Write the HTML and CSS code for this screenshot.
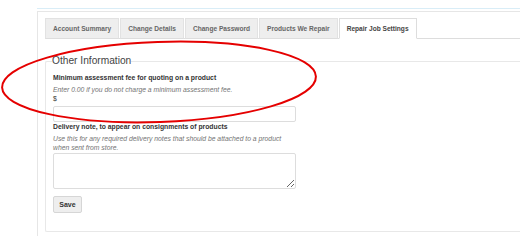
FILE: index.html
```html
<!DOCTYPE html>
<html>
<head>
    <title>Repair Job Settings</title>
    <meta name="viewport" content="width=device-width, initial-scale=1">
    <link rel="stylesheet" href="styles.css">
</head>
<body>
  <div class="page">
    <div class="panel">
      <ul class="tabs">
        <li>Account Summary</li>
        <li>Change Details</li>
        <li>Change Password</li>
        <li>Products We Repair</li>
        <li class="active">Repair Job Settings</li>
      </ul>
      <form class="tab-content" autocomplete="off">
        <fieldset>
          <legend>Other Information</legend>
          <div class="field">
            <label for="minFee">Minimum assessment fee for quoting on a product</label>
            <p class="help">Enter 0.00 if you do not charge a minimum assessment fee.</p>
            <span class="addon">$</span>
            <input type="text" id="minFee" name="minFee">
          </div>
          <div class="field">
            <label for="deliveryNote">Delivery note, to appear on consignments of products</label>
            <p class="help">Use this for any required delivery notes that should be attached to a product<br>when sent from store.</p>
            <textarea id="deliveryNote" name="deliveryNote"></textarea>
          </div>
          <button type="button" class="btn">Save</button>
        </fieldset>
      </form>
    </div>
  </div>
  <svg class="mark" width="520" height="242" viewBox="0 0 520 242">
    <ellipse cx="159" cy="82" rx="157" ry="40" transform="rotate(-2 159 82)" fill="none" stroke="#e50000" stroke-width="2"/>
  </svg>
</body>
</html>
```

FILE: styles.css
```css
* {
  -webkit-box-sizing: border-box;
  -moz-box-sizing: border-box;
  box-sizing: border-box;
}

html, body {
  margin: 0;
  height: 100%;
  overflow: hidden;
  background: #fff;
}

body {
  font-family: "Liberation Sans", Arial, sans-serif;
  color: #333;
  position: relative;
}

.page {
  margin: 8px 0 0 37px;
  width: 483px;
  border-top: 1px solid #d9edf7;
}

.panel {
  margin-top: 2px;
  border-top: 1px solid #e6e6e6;
  border-left: 1px solid #e6e6e6;
  padding: 6px 0 0 7px;
  height: 225px;
}

.tabs {
  list-style: none;
  margin: 0;
  padding: 0;
  display: flex;
  border-bottom: 1px solid #ddd;
}
.tabs li {
  font-size: 6.6px;
  font-weight: bold;
  color: #666;
  line-height: 19px;
  padding: 0 7px;
  margin-right: 1px;
  margin-bottom: -1px;
  background: #eee;
  border: 1px solid #e2e2e2;
  border-bottom-color: #ddd;
}
.tabs li.active {
  background: #fff;
  color: #444;
  border-color: #ddd;
  border-bottom-color: #fff;
}

.tab-content {
  margin-top: 16px;
}

fieldset {
  margin: 0;
  min-width: 0;
  padding: 0 7px 18px;
  border: 1px solid #e8e8e8;
  border-right: none;
  border-radius: 2px 0 0 2px;
}
legend {
  font-size: 10.2px;
  line-height: 12px;
  color: #444;
  padding: 0;
  margin-left: -1px;
}

.field {
  font-size: 6.8px;
}
.field label {
  display: block;
  font-weight: bold;
  line-height: 10px;
  margin-top: 6px;
  color: #333;
}
.help {
  margin: 2px 0 0;
  font-style: italic;
  color: #737373;
  line-height: 9px;
}
.addon {
  display: block;
  line-height: 10px;
}
input[type=text],
textarea {
  display: block;
  width: 243px;
  border: 1px solid #ddd;
  border-radius: 2px;
  font: inherit;
  margin: 2px 0 0;
  padding: 2px 4px;
}
input[type=text] {
  height: 16px;
}
textarea {
  height: 36px;
  margin-top: 1px;
}
.field + .field label {
  margin-top: 0;
}

.btn {
  display: block;
  margin-top: 7px;
  font-family: "Liberation Sans", Arial, sans-serif;
  font-size: 7px;
  font-weight: bold;
  color: #333;
  background: #eee;
  border: 1px solid #d6d6d6;
  border-radius: 2px;
  height: 17px;
  width: 29px;
  padding: 0;
}

.mark {
  position: absolute;
  left: 0;
  top: 0;
  pointer-events: none;
}
```
